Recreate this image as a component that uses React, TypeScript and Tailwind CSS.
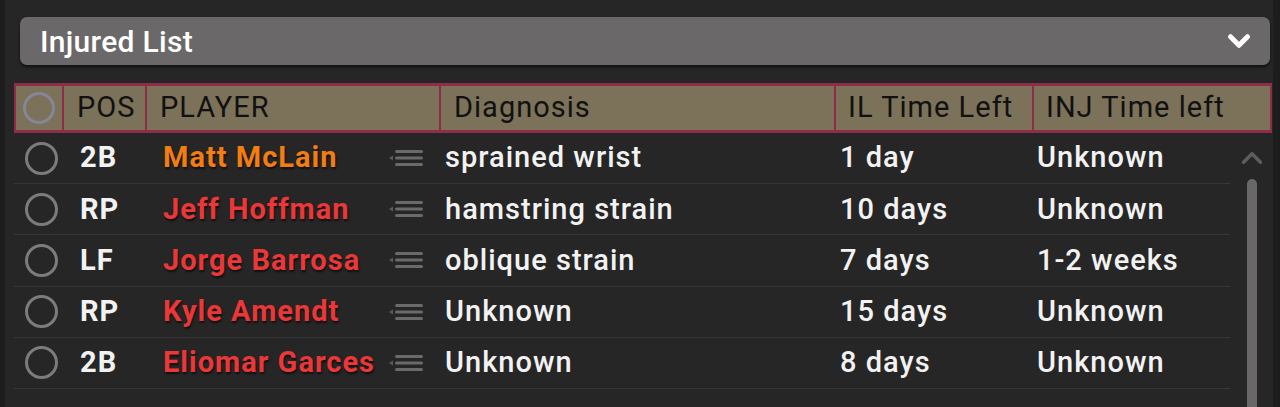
import { ChevronDown, ChevronUp } from "lucide-react";

interface InjuredPlayer {
  pos: string;
  name: string;
  diagnosis: string;
  ilLeft: string;
  injLeft: string;
  dayToDay?: boolean;
}

const players: InjuredPlayer[] = [
  { pos: "2B", name: "Matt McLain", diagnosis: "sprained wrist", ilLeft: "1 day", injLeft: "Unknown", dayToDay: true },
  { pos: "RP", name: "Jeff Hoffman", diagnosis: "hamstring strain", ilLeft: "10 days", injLeft: "Unknown" },
  { pos: "LF", name: "Jorge Barrosa", diagnosis: "oblique strain", ilLeft: "7 days", injLeft: "1-2 weeks" },
  { pos: "RP", name: "Kyle Amendt", diagnosis: "Unknown", ilLeft: "15 days", injLeft: "Unknown" },
  { pos: "2B", name: "Eliomar Garces", diagnosis: "Unknown", ilLeft: "8 days", injLeft: "Unknown" },
];

function ListIcon() {
  return (
    <svg width="36" height="22" viewBox="0 0 36 22" className="shrink-0">
      <path d="M2 11 L6 8.5 L6 13.5 Z" fill="#5a5a5a" />
      <rect x="8" y="3" width="28" height="3" rx="1.5" fill="#6a6a6a" />
      <rect x="8" y="9.5" width="28" height="3" rx="1.5" fill="#6a6a6a" />
      <rect x="8" y="16" width="28" height="3" rx="1.5" fill="#6a6a6a" />
    </svg>
  );
}

function PlayerRow({ player }: { player: InjuredPlayer }) {
  return (
    <div className="grid h-[51.2px] grid-cols-[48px_83px_294px_395px_198px_1fr] items-center border-b border-[#363636] text-[29px] font-medium tracking-[0.035em] text-[#f2f2f2]">
      <div className="flex justify-center pl-[6px]">
        <span className="h-[33px] w-[33px] rounded-full border-[3px] border-[#7c7c7c]" />
      </div>
      <div className="pl-[18px] font-bold">{player.pos}</div>
      <div className="flex items-center justify-between pl-[18px] pr-[16px]">
        <span
          className={`whitespace-nowrap font-bold [text-shadow:1px_2px_2px_rgba(0,0,0,0.6)] ${
            player.dayToDay ? "text-[#f27d12]" : "text-[#ea3838]"
          }`}
        >
          {player.name}
        </span>
        <ListIcon />
      </div>
      <div className="pl-[6px]">{player.diagnosis}</div>
      <div className="pl-[6px]">{player.ilLeft}</div>
      <div className="pl-[5px]">{player.injLeft}</div>
    </div>
  );
}

export default function App() {
  return (
    <div className="h-[407px] w-[1280px] overflow-hidden bg-[#262626] font-['Roboto',sans-serif]">
      <div className="flex h-full border-l-[5px] border-r-[7px] border-[#1d1d1d]">
        <div className="flex-1 pt-[17px]">
          <div className="ml-[15px] mr-[3px] flex h-[48px] items-center justify-between rounded-[7px] bg-[#6b6869] pl-[20px] pr-[14px] shadow-[0_2px_3px_rgba(0,0,0,0.6)]">
            <span className="text-[30px] font-medium tracking-[0.01em] text-white">Injured List</span>
            <ChevronDown size={34} strokeWidth={3.5} className="text-white" />
          </div>

          <div className="ml-[9px] mr-[1px] mt-[18px] grid h-[50px] grid-cols-[46px_83px_294px_395px_198px_1fr] border-y-[3px] border-x-[2px] border-[#8f2d48] bg-[#7b7259] text-[29px] tracking-[0.035em] text-[#111]">
            <div className="flex items-center justify-center">
              <span className="h-[32px] w-[32px] rounded-full border-[3px] border-[#868699]" />
            </div>
            <div className="flex items-center border-l-[2px] border-[#8f2d48] pl-[13px]">POS</div>
            <div className="flex items-center border-l-[2px] border-[#8f2d48] pl-[13px]">PLAYER</div>
            <div className="flex items-center border-l-[2px] border-[#8f2d48] pl-[13px]">Diagnosis</div>
            <div className="flex items-center border-l-[2px] border-[#8f2d48] pl-[12px]">IL Time Left</div>
            <div className="flex items-center border-l-[2px] border-[#8f2d48] pl-[12px]">INJ Time left</div>
          </div>

          <div className="flex">
            <div className="ml-[9px] w-[1216px]">
              {players.map((p) => (
                <PlayerRow key={p.name} player={p} />
              ))}
            </div>
            <div className="flex flex-1 flex-col items-center pt-[8px]">
              <ChevronUp size={34} strokeWidth={2.5} className="text-[#5e5c5d]" />
              <div className="mt-[4px] h-[300px] w-[10px] rounded-t-full bg-[#6a6768]" />
            </div>
          </div>
        </div>
      </div>
    </div>
  );
}
